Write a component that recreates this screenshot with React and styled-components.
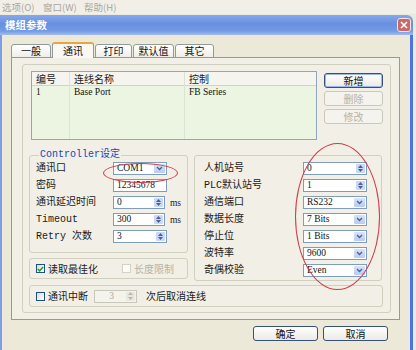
import React from "react";
import styled, { createGlobalStyle } from "styled-components";

const CJK = `"Noto Sans CJK SC", "Noto Sans CJK TC", sans-serif`;
const LABEL_FONT = `"Liberation Mono", "Noto Sans CJK SC", monospace`;
const VALUE_FONT = `"Liberation Serif", "Noto Sans CJK SC", serif`;

const GlobalStyle = createGlobalStyle`
	html, body {
		margin: 0;
		padding: 0;
		background: #ece9d8;
	}
	body {
		width: 416px;
		height: 350px;
		overflow: hidden;
		font-family: ${ CJK };
	}
`;

const Screen = styled.div`
	position: relative;
	width: 416px;
	height: 350px;
	display: flex;
	flex-direction: column;
	overflow: hidden;
`;

const MenuBar = styled.div`
	height: 14px;
	display: flex;
	align-items: center;
	padding-left: 2px;
	background: #f1efe7;
	font-size: 9.5px;
	line-height: 12px;
	color: #a9a79d;
`;

const MenuItem = styled.span`
	width: 41px;
`;

const Dialog = styled.div`
	flex: 1;
	margin: 1px 3px 0 0;
	display: flex;
	flex-direction: column;
`;

const TitleBar = styled.div`
	height: 20px;
	display: flex;
	align-items: center;
	justify-content: space-between;
	padding: 0 2px 0 5px;
	border-top-right-radius: 6px;
	background: linear-gradient( to bottom, #86a8ec 0%, #6890df 45%, #739ae4 80%, #a2bdef 100% );
	color: #ffffff;
	font-size: 10.5px;
	font-weight: bold;
	line-height: 12px;
`;

const CloseButton = styled.div`
	width: 14px;
	height: 14px;
	display: flex;
	align-items: center;
	justify-content: center;
	border: 1px solid #f0e4e4;
	border-radius: 3px;
	background: #c9696a;
	box-sizing: border-box;
`;

const DialogBody = styled.div`
	flex: 1;
	display: flex;
	flex-direction: column;
	padding: 7px 10px 0 9px;
	border-left: 2px solid #7c9de4;
	border-right: 3px solid #4a74e0;
	background: #ece9d8;
`;

const TabRow = styled.div`
	display: flex;
	align-items: flex-end;
	gap: 1px;
	height: 16px;
	margin-bottom: -1px;
`;

const Tab = styled.div`
	position: relative;
	z-index: ${ props => props.active ? 1 : 0 };
	width: ${ props => props.w }px;
	height: ${ props => props.active ? 16 : 14 }px;
	box-sizing: border-box;
	display: flex;
	align-items: center;
	justify-content: center;
	border: 1px solid #919b9c;
	border-bottom: ${ props => props.active ? "none" : "1px solid #919b9c" };
	border-top: ${ props => props.active ? "2px solid #f0a23c" : "1px solid #919b9c" };
	border-radius: 3px 3px 0 0;
	background: ${ props => props.active ? "#f9f8f3" : "linear-gradient( to bottom, #ffffff, #efeee8 )" };
	font-size: 10px;
	line-height: 12px;
	color: #111111;
`;

const Panel = styled.div`
	width: 389px;
	box-sizing: border-box;
	padding: 6px 8px 6px 10px;
	border: 1px solid #919b9c;
	background: #f1efe6;
`;

const GroupFrame = styled.div`
	display: flex;
	flex-direction: column;
	padding: 6px 7px 5px 6px;
	border: 1px solid #d0d0bf;
	border-radius: 3px;
`;

const TopRow = styled.div`
	display: flex;
	gap: 7px;
`;

const ListView = styled.div`
	display: flex;
	width: 286px;
	height: 69px;
	margin-left: 2px;
	box-sizing: border-box;
	border: 1px solid #8fa6bd;
	background: #ecf5e2;
`;

const ListColumn = styled.div`
	display: flex;
	flex-direction: column;
	width: ${ props => props.w ? props.w + "px" : "auto" };
	flex: ${ props => props.w ? "none" : 1 };
	border-right: ${ props => props.last ? "none" : "1px solid #dbe4d2" };
`;

const HeaderCell = styled.div`
	height: 13px;
	padding-left: 4px;
	display: flex;
	align-items: center;
	background: #f5f4ef;
	border-bottom: 1px solid #d5d2c4;
	font-size: 10px;
	line-height: 12px;
	color: #222222;
`;

const Cell = styled.div`
	height: 12px;
	padding-left: 4px;
	display: flex;
	align-items: center;
	font-family: ${ VALUE_FONT };
	font-size: 9.5px;
	color: #111111;
`;

const ButtonColumn = styled.div`
	display: flex;
	flex-direction: column;
	gap: 3px;
	padding-top: 2px;
`;

const Button = styled.div`
	width: ${ props => props.w }px;
	height: 15px;
	box-sizing: border-box;
	display: flex;
	align-items: center;
	justify-content: center;
	border: 1px solid ${ props => props.disabled ? "#cbc8bb" : "#36507a" };
	border-radius: 3px;
	background: ${ props => props.disabled ? "#f4f3ee" : "linear-gradient( to bottom, #ffffff, #ebeae4 )" };
	box-shadow: ${ props => props.focused ? "inset 0 0 0 1px #9db6ec" : "none" };
	font-size: 10px;
	line-height: 12px;
	color: ${ props => props.disabled ? "#b6b4a8" : "#111111" };
`;

const MiddleRow = styled.div`
	display: flex;
	gap: 6px;
	margin-top: 15px;
`;

const LeftColumn = styled.div`
	display: flex;
	flex-direction: column;
	gap: 5px;
	width: 159px;
`;

const GroupBox = styled.div`
	display: flex;
	flex-direction: column;
	gap: ${ props => props.gap || 4 }px;
	width: ${ props => props.w ? props.w + "px" : "auto" };
	height: ${ props => props.h }px;
	box-sizing: border-box;
	margin-top: ${ props => props.mt || 0 }px;
	padding: ${ props => props.pad || "0 6px" };
	border: 1px solid #d0d0bf;
	border-radius: 3px;
	justify-content: ${ props => props.center ? "center" : "flex-start" };
`;

const GroupTitle = styled.div`
	align-self: flex-start;
	margin: -7px 0 -3px 3px;
	padding: 0 1px;
	background: #f1efe6;
	font-family: ${ LABEL_FONT };
	font-size: 10px;
	line-height: 12px;
	color: #1b45b8;
`;

const FieldRow = styled.div`
	display: flex;
	align-items: center;
	height: 13px;
`;

const Label = styled.span`
	width: ${ props => props.w }px;
	flex: none;
	font-family: ${ LABEL_FONT };
	font-size: 10px;
	line-height: 12px;
	color: #1a1a1a;
	white-space: nowrap;
`;

const Unit = styled.span`
	margin-left: 5px;
	font-family: ${ VALUE_FONT };
	font-size: 9.5px;
	color: #222222;
`;

const Field = styled.div`
	width: ${ props => props.w }px;
	height: 13px;
	box-sizing: border-box;
	display: flex;
	align-items: stretch;
	border: 1px solid ${ props => props.disabled ? "#c9c7ba" : "#7f9db9" };
	background: ${ props => props.disabled ? "#f5f4ec" : "#ffffff" };
`;

const FieldText = styled.span`
	flex: 1;
	display: flex;
	align-items: center;
	justify-content: ${ props => props.center ? "center" : "flex-start" };
	padding-left: 3px;
	font-family: ${ VALUE_FONT };
	font-size: 9.5px;
	line-height: 11px;
	color: ${ props => props.disabled ? "#aaa89c" : "#111111" };
`;

const SpinBox = styled.div`
	width: 9px;
	margin: 1px;
	display: flex;
	flex-direction: column;
	align-items: center;
	justify-content: space-around;
	background: ${ props => props.disabled ? "#e9e8e0" : "#c9d8f9" };
	border-radius: 1px;
`;

const DropButton = styled.div`
	width: 11px;
	margin: 1px;
	display: flex;
	align-items: center;
	justify-content: center;
	background: linear-gradient( to bottom, #d6e2fd, #b9cbf5 );
	border-radius: 1px;
`;

const CheckRow = styled.div`
	display: flex;
	align-items: center;
	gap: 3px;
	margin-left: ${ props => props.ml || 0 }px;
	margin-right: ${ props => props.mr || 0 }px;
	font-size: 10px;
	line-height: 12px;
	color: ${ props => props.disabled ? "#b5b3a7" : "#1a1a1a" };
`;

const CheckSquare = styled.div`
	width: 9px;
	height: 9px;
	box-sizing: border-box;
	display: flex;
	align-items: center;
	justify-content: center;
	border: 1px solid ${ props => props.disabled ? "#d4d2c6" : "#1f4f86" };
	background: ${ props => props.disabled ? "#fbfbf8" : "linear-gradient( to bottom right, #dcdcd5, #ffffff )" };
`;

const InlineRow = styled.div`
	display: flex;
	align-items: center;
`;

const Footer = styled.div`
	display: flex;
	justify-content: flex-end;
	gap: 5px;
	margin-top: 6px;
	padding-right: 12px;
`;

const Mark = styled.div`
	position: absolute;
	left: ${ props => props.x }px;
	top: ${ props => props.y }px;
	width: ${ props => props.w }px;
	height: ${ props => props.h }px;
	border: 1px solid #d23a45;
	border-radius: 50%;
	pointer-events: none;
`;

function Chevron() {
	return <svg width="7" height="5" viewBox="0 0 7 5">
		<path d="M1 1 L3.5 3.5 L6 1" fill="none" stroke="#4d6185" strokeWidth="1.3" />
	</svg>;
}

function SpinArrows( { disabled } ) {
	const fill = disabled ? "#b9b8b0" : "#4d6185";
	return <>
		<svg width="5" height="3" viewBox="0 0 5 3"><path d="M0 3 L2.5 0 L5 3 Z" fill={ fill } /></svg>
		<svg width="5" height="3" viewBox="0 0 5 3"><path d="M0 0 L2.5 3 L5 0 Z" fill={ fill } /></svg>
	</>;
}

function Input( { value, kind, w, disabled, center } ) {
	return <Field w={ w } disabled={ disabled }>
		<FieldText disabled={ disabled } center={ center }>{ value }</FieldText>
		{ kind === "spin" && <SpinBox disabled={ disabled }><SpinArrows disabled={ disabled } /></SpinBox> }
		{ kind === "combo" && <DropButton><Chevron /></DropButton> }
	</Field>;
}

function Check( { checked, disabled, children, mr } ) {
	return <CheckRow disabled={ disabled } mr={ mr }>
		<CheckSquare disabled={ disabled }>
			{ checked && <svg width="7" height="6" viewBox="0 0 7 6">
				<path d="M0.8 3 L2.6 4.8 L6.2 1" fill="none" stroke="#21a121" strokeWidth="1.5" />
			</svg> }
		</CheckSquare>
		{ children }
	</CheckRow>;
}

const tabs = [
	{ label: "一般", w: 40 },
	{ label: "通讯", w: 42, active: true },
	{ label: "打印", w: 37 },
	{ label: "默认值", w: 41 },
	{ label: "其它", w: 39 },
];

const columns = [
	{ title: "编号", value: "1", w: 37 },
	{ title: "连线名称", value: "Base Port", w: 114 },
	{ title: "控制", value: "FB Series" },
];

const controllerFields = [
	{ label: "通讯口", value: "COM1", kind: "combo" },
	{ label: "密码", value: "12345678" },
	{ label: "通讯延迟时间", value: "0", kind: "spin", unit: "ms" },
	{ label: "Timeout", value: "300", kind: "spin", unit: "ms" },
	{ label: "Retry 次数", value: "3", kind: "spin" },
];

const stationFields = [
	{ label: "人机站号", value: "0", kind: "spin" },
	{ label: "PLC默认站号", value: "1", kind: "spin" },
	{ label: "通信端口", value: "RS232", kind: "combo" },
	{ label: "数据长度", value: "7 Bits", kind: "combo" },
	{ label: "停止位", value: "1 Bits", kind: "combo" },
	{ label: "波特率", value: "9600", kind: "combo" },
	{ label: "奇偶校验", value: "Even", kind: "combo" },
];

export default function App() {
	return <Screen>
		<GlobalStyle />
		<MenuBar>
			<MenuItem>选项(O)</MenuItem>
			<MenuItem>窗口(W)</MenuItem>
			<MenuItem>帮助(H)</MenuItem>
		</MenuBar>
		<Dialog>
			<TitleBar>
				<span>模组参数</span>
				<CloseButton>
					<svg width="8" height="8" viewBox="0 0 8 8">
						<path d="M1 1 L7 7 M7 1 L1 7" stroke="#ffffff" strokeWidth="1.6" />
					</svg>
				</CloseButton>
			</TitleBar>
			<DialogBody>
				<TabRow>
					{ tabs.map( tab => <Tab key={ tab.label } w={ tab.w } active={ tab.active }>{ tab.label }</Tab> ) }
				</TabRow>
				<Panel>
					<GroupFrame>
						<TopRow>
							<ListView>
								{ columns.map( ( col, i ) => <ListColumn key={ col.title } w={ col.w } last={ i === columns.length - 1 }>
									<HeaderCell>{ col.title }</HeaderCell>
									<Cell>{ col.value }</Cell>
								</ListColumn> ) }
							</ListView>
							<ButtonColumn>
								<Button w={ 59 } focused>新增</Button>
								<Button w={ 59 } disabled>删除</Button>
								<Button w={ 59 } disabled>修改</Button>
							</ButtonColumn>
						</TopRow>
						<MiddleRow>
							<LeftColumn>
								<GroupBox h={ 98 } pad="0 6px 0 6px" gap={ 4 }>
									<GroupTitle>Controller设定</GroupTitle>
									{ controllerFields.map( f => <FieldRow key={ f.label }>
										<Label w={ 77 }>{ f.label }</Label>
										<Input w={ 54 } value={ f.value } kind={ f.kind } />
										{ f.unit && <Unit>{ f.unit }</Unit> }
									</FieldRow> ) }
								</GroupBox>
								<GroupBox h={ 21 } center pad="0 6px">
									<InlineRow>
										<Check checked mr={ 24 }>读取最佳化</Check>
										<Check disabled>长度限制</Check>
									</InlineRow>
								</GroupBox>
							</LeftColumn>
							<GroupBox h={ 126 } w={ 188 } pad="6px 9px 0 9px" gap={ 4 }>
								{ stationFields.map( f => <FieldRow key={ f.label }>
									<Label w={ 99 }>{ f.label }</Label>
									<Input w={ 64 } value={ f.value } kind={ f.kind } />
								</FieldRow> ) }
							</GroupBox>
						</MiddleRow>
						<GroupBox h={ 22 } mt={ 4 } center pad="0 6px">
							<InlineRow>
								<Check mr={ 6 }>通讯中断</Check>
								<Input w={ 43 } value="3" kind="spin" disabled center />
								<CheckRow ml={ 9 }>次后取消连线</CheckRow>
							</InlineRow>
						</GroupBox>
					</GroupFrame>
				</Panel>
				<Footer>
					<Button w={ 65 }>确定</Button>
					<Button w={ 65 }>取消</Button>
				</Footer>
			</DialogBody>
		</Dialog>
		<Mark x={ 103 } y={ 163 } w={ 73 } h={ 18 } />
		<Mark x={ 295 } y={ 143 } w={ 83 } h={ 145 } />
	</Screen>;
}
